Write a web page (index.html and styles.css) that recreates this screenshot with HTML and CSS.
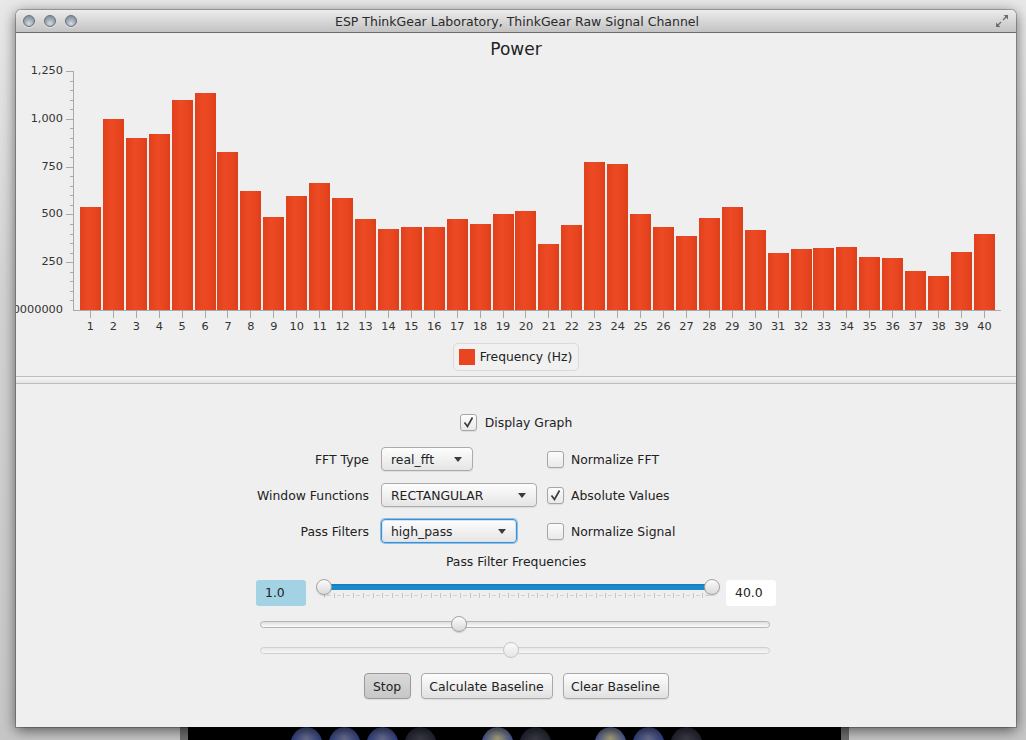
FILE: index.html
```html
<!DOCTYPE html>
<html>
<head>
<meta charset="utf-8">
<title>ESP ThinkGear Laboratory</title>
<link rel="stylesheet" href="styles.css">
</head>
<body>
<div class="backwin">
  <span class="ball blue"></span><span class="ball blue"></span><span class="ball blue"></span><span class="ball dark"></span>
  <span class="ball bright g1"></span><span class="ball dark"></span>
  <span class="ball bright g2"></span><span class="ball blue"></span><span class="ball dark"></span>
</div>
<div class="window">
  <div class="titlebar">
    <div class="lights"><span></span><span></span><span></span></div>
    <div class="title">ESP ThinkGear Laboratory, ThinkGear Raw Signal Channel</div>
    <svg class="resize" width="14" height="14" viewBox="0 0 14 14"><path d="M2.5 11.5L6 8M11.5 2.5L8 6" stroke="#6d6d6d" stroke-width="1.4" fill="none"/><path d="M1 13V8.6L5.4 13Z M13 1V5.4L8.6 1Z" fill="#6d6d6d"/></svg>
  </div>
  <div class="content">
    <section class="chart">
      <h1 class="chart-title">Power</h1>
      <div class="plot-row">
        <div class="y-labels">
          <span>1,250</span><span>1,000</span><span>750</span><span>500</span><span>250</span><span>0.00000000</span>
        </div>
        <svg class="y-ticks" width="11" height="247" viewBox="0 0 11 247">
          <path d="M10.5 7V247 M3 7.5H11 M7 17.5H11 M7 26.5H11 M7 36.5H11 M7 45.5H11 M3 55.5H11 M7 64.5H11 M7 74.5H11 M7 83.5H11 M7 93.5H11 M3 103.5H11 M7 112.5H11 M7 122.5H11 M7 131.5H11 M7 141.5H11 M3 150.5H11 M7 160.5H11 M7 170.5H11 M7 179.5H11 M7 189.5H11 M3 198.5H11 M7 208.5H11 M7 217.5H11 M7 227.5H11 M7 236.5H11" stroke="#a9a9a9" stroke-width="1" fill="none"/>
        </svg>
        <div class="plot">
          <div class="bars">
            <div class="slot"><div class="bar" style="height:103px"></div></div>
            <div class="slot"><div class="bar" style="height:191px"></div></div>
            <div class="slot"><div class="bar" style="height:172px"></div></div>
            <div class="slot"><div class="bar" style="height:176px"></div></div>
            <div class="slot"><div class="bar" style="height:210px"></div></div>
            <div class="slot"><div class="bar" style="height:217px"></div></div>
            <div class="slot"><div class="bar" style="height:158px"></div></div>
            <div class="slot"><div class="bar" style="height:119px"></div></div>
            <div class="slot"><div class="bar" style="height:93px"></div></div>
            <div class="slot"><div class="bar" style="height:114px"></div></div>
            <div class="slot"><div class="bar" style="height:127px"></div></div>
            <div class="slot"><div class="bar" style="height:112px"></div></div>
            <div class="slot"><div class="bar" style="height:91px"></div></div>
            <div class="slot"><div class="bar" style="height:81px"></div></div>
            <div class="slot"><div class="bar" style="height:83px"></div></div>
            <div class="slot"><div class="bar" style="height:83px"></div></div>
            <div class="slot"><div class="bar" style="height:91px"></div></div>
            <div class="slot"><div class="bar" style="height:86px"></div></div>
            <div class="slot"><div class="bar" style="height:96px"></div></div>
            <div class="slot"><div class="bar" style="height:99px"></div></div>
            <div class="slot"><div class="bar" style="height:66px"></div></div>
            <div class="slot"><div class="bar" style="height:85px"></div></div>
            <div class="slot"><div class="bar" style="height:148px"></div></div>
            <div class="slot"><div class="bar" style="height:146px"></div></div>
            <div class="slot"><div class="bar" style="height:96px"></div></div>
            <div class="slot"><div class="bar" style="height:83px"></div></div>
            <div class="slot"><div class="bar" style="height:74px"></div></div>
            <div class="slot"><div class="bar" style="height:92px"></div></div>
            <div class="slot"><div class="bar" style="height:103px"></div></div>
            <div class="slot"><div class="bar" style="height:80px"></div></div>
            <div class="slot"><div class="bar" style="height:57px"></div></div>
            <div class="slot"><div class="bar" style="height:61px"></div></div>
            <div class="slot"><div class="bar" style="height:62px"></div></div>
            <div class="slot"><div class="bar" style="height:63px"></div></div>
            <div class="slot"><div class="bar" style="height:53px"></div></div>
            <div class="slot"><div class="bar" style="height:52px"></div></div>
            <div class="slot"><div class="bar" style="height:39px"></div></div>
            <div class="slot"><div class="bar" style="height:34px"></div></div>
            <div class="slot"><div class="bar" style="height:58px"></div></div>
            <div class="slot"><div class="bar" style="height:76px"></div></div>
          </div>
        </div>
      </div>
      <div class="x-axis">
        <span>1</span><span>2</span><span>3</span><span>4</span><span>5</span><span>6</span><span>7</span><span>8</span><span>9</span><span>10</span>
        <span>11</span><span>12</span><span>13</span><span>14</span><span>15</span><span>16</span><span>17</span><span>18</span><span>19</span><span>20</span>
        <span>21</span><span>22</span><span>23</span><span>24</span><span>25</span><span>26</span><span>27</span><span>28</span><span>29</span><span>30</span>
        <span>31</span><span>32</span><span>33</span><span>34</span><span>35</span><span>36</span><span>37</span><span>38</span><span>39</span><span>40</span>
      </div>
      <div class="legend"><span class="swatch"></span>Frequency (Hz)</div>
    </section>
    <div class="divider"></div>
    <section class="controls">
      <label class="check main-check"><span class="box"><svg width="15" height="15" viewBox="0 0 15 15"><path d="M3.5 7.5L6.5 11.5L11.5 2.5" stroke="#3b3b3b" stroke-width="1.7" fill="none"/></svg></span>Display Graph</label>
      <div class="form-grid">
        <span class="form-label">FFT Type</span>
        <div class="combo-cell"><div class="combo w-fft"><span>real_fft</span><i class="arrow"></i></div></div>
        <label class="check"><span class="box"></span>Normalize FFT</label>

        <span class="form-label">Window Functions</span>
        <div class="combo-cell"><div class="combo w-win"><span>RECTANGULAR</span><i class="arrow"></i></div></div>
        <label class="check"><span class="box"><svg width="15" height="15" viewBox="0 0 15 15"><path d="M3.5 7.5L6.5 11.5L11.5 2.5" stroke="#3b3b3b" stroke-width="1.7" fill="none"/></svg></span>Absolute Values</label>

        <span class="form-label">Pass Filters</span>
        <div class="combo-cell"><div class="combo w-pass focused"><span>high_pass</span><i class="arrow"></i></div></div>
        <label class="check"><span class="box"></span>Normalize Signal</label>
      </div>
      <div class="freq-title">Pass Filter Frequencies</div>
      <div class="range-row">
        <div class="value-box low">1.0</div>
        <div class="range">
          <div class="range-fill"></div>
          <div class="range-ticks"></div>
          <span class="thumb" style="left:0px"></span>
          <span class="thumb" style="left:388px"></span>
        </div>
        <div class="value-box high">40.0</div>
      </div>
      <div class="slider"><div class="track"></div><span class="thumb" style="left:191px"></span></div>
      <div class="slider disabled"><div class="track"></div><span class="thumb" style="left:243px"></span></div>
      <div class="buttons">
        <button class="btn pressed w-stop">Stop</button>
        <button class="btn w-calc">Calculate Baseline</button>
        <button class="btn w-clear">Clear Baseline</button>
      </div>
    </section>
  </div>
</div>
</body>
</html>
```
FILE: styles.css
```css
* { box-sizing: border-box; }
html, body { margin: 0; }
body {
  width: 1026px;
  height: 740px;
  overflow: hidden;
  position: relative;
  padding: 10px 0 0 16px;
  background: linear-gradient(#e8e8e8, #d2d2d2 40%, #c6c6c6);
  font-family: "DejaVu Sans", "Liberation Sans", sans-serif;
  color: #2b2b2b;
}

/* background window peeking below */
.backwin {
  position: absolute;
  left: 180px;
  top: 700px;
  width: 669px;
  height: 60px;
  background: #000;
  border-left: 8px solid #6e6e6e;
  border-right: 8px solid #6e6e6e;
  display: flex;
  align-items: flex-start;
  gap: 5px;
  padding: 27px 0 0 102px;
}
.ball { width: 33px; height: 40px; border-radius: 50%; flex: none; }
.ball.blue { background: radial-gradient(circle at 50% 28%, #6a6f8e 0, #2b3a78 45%, #101636 80%); }
.ball.dark { background: radial-gradient(circle at 50% 28%, #3a3b44 0, #1b1d2a 50%, #07070b 85%); }
.ball.bright { background: radial-gradient(circle at 50% 28%, #a7a27a 0, #34448a 50%, #111838 85%); }
.ball.g1 { margin-left: 39px; }
.ball.g2 { margin-left: 37px; }

/* main window */
.window {
  position: relative;
  z-index: 1;
  width: 1000px;
  height: 717px;
  background: #efefef;
  border-radius: 5px 5px 0 0;
  box-shadow: 0 3px 14px rgba(0,0,0,.6), 0 0 0 1px rgba(0,0,0,.22);
  overflow: hidden;
  display: flex;
  flex-direction: column;
}
.titlebar {
  flex: none;
  height: 23px;
  display: grid;
  grid-template-columns: 1fr auto 1fr;
  align-items: center;
  padding: 0 5px 0 7px;
  background: linear-gradient(#ececec, #d9d9d9 45%, #c3c3c3);
  border-bottom: 1px solid #6c6c6c;
  border-radius: 5px 5px 0 0;
}
.lights { display: flex; gap: 9px; }
.lights span {
  width: 12px;
  height: 12px;
  border-radius: 50%;
  background: radial-gradient(circle at 50% 75%, #d5dce2 0, #a2adb8 45%, #78838f 100%);
  border: 1px solid #66707b;
  box-shadow: 0 1px 0 rgba(255,255,255,.5);
}
.title {
  font-size: 12.5px;
  color: #2a2a2a;
  white-space: nowrap;
}
.resize { justify-self: end; margin-right: 2px; }

.content { flex: 1; display: flex; flex-direction: column; }

/* chart */
.chart {
  height: 343px;
  display: flex;
  flex-direction: column;
  padding-top: 5px;
}
.chart-title {
  margin: 0 0 4px;
  font-size: 17px;
  line-height: 22px;
  font-weight: normal;
  text-align: center;
  color: #222;
}
.plot-row { display: flex; height: 247px; }
.y-labels {
  width: 47px;
  height: 253px;
  margin-bottom: -6px;
  display: flex;
  flex-direction: column;
  justify-content: space-between;
  font-size: 11.3px;
  line-height: 14px;
  color: #333;
}
.y-labels span {
  display: flex;
  justify-content: flex-end;
  overflow: hidden;
  white-space: nowrap;
}
.y-ticks { flex: none; display: block; }
.plot {
  width: 927px;
  height: 240px;
  margin-top: 7px;
  border-bottom: 1px solid #a9a9a9;
}
.bars {
  height: 100%;
  display: flex;
  align-items: flex-end;
  padding: 0 5px;
}
.slot { flex: 1; display: flex; justify-content: center; }
.bar {
  width: 21px;
  background: linear-gradient(90deg, #e0401c, #ec4a24 40%, #e9461f 70%, #dc3f1b);
}
.x-axis {
  display: flex;
  padding-left: 63px;
  width: 985px;
  padding-right: 5px;
  height: 22px;
}
.x-axis span {
  flex: 1;
  display: flex;
  flex-direction: column;
  align-items: center;
  font-size: 11.3px;
  line-height: 13px;
  color: #333;
}
.x-axis span::before {
  content: "";
  width: 1px;
  height: 7px;
  margin-bottom: 2px;
  background: #a9a9a9;
}
.legend {
  align-self: center;
  margin-top: 10px;
  height: 28px;
  display: flex;
  align-items: center;
  gap: 5px;
  padding: 0 6px 0 5px;
  border: 1px solid #dadada;
  border-radius: 5px;
  background: #f1f1f1;
  font-size: 12.3px;
  color: #222;
}
.swatch { width: 16px; height: 16px; background: #ea4521; }

.divider {
  height: 8px;
  flex: none;
  border-top: 1px solid #bcbcbc;
  border-bottom: 1px solid #bcbcbc;
  background: linear-gradient(#f6f6f6, #e4e4e4);
}

/* controls */
.controls {
  flex: 1;
  display: flex;
  flex-direction: column;
  padding-top: 30px;
  font-size: 12.4px;
  color: #222;
}
.check {
  display: flex;
  align-items: center;
  gap: 7px;
  height: 17px;
  line-height: 17px;
  white-space: nowrap;
}
.main-check { align-self: center; gap: 8px; }
.box {
  width: 17px;
  height: 17px;
  flex: none;
  border: 1px solid #a6a6a6;
  border-radius: 3px;
  background: linear-gradient(#fcfcfc, #e9e9e9);
  box-shadow: 0 1px 1px rgba(0,0,0,.08);
  display: flex;
  align-items: center;
  justify-content: center;
}
.form-grid {
  margin-top: 16px;
  display: grid;
  grid-template-columns: 365px 166px 1fr;
  grid-auto-rows: 24px;
  row-gap: 12px;
  align-items: center;
}
.form-label { text-align: right; padding-right: 12px; white-space: nowrap; }
.combo-cell { display: flex; }
.combo {
  height: 24px;
  display: flex;
  align-items: center;
  justify-content: space-between;
  padding: 0 10px 0 9px;
  border: 1px solid #ababab;
  border-radius: 4px;
  background: linear-gradient(#fdfdfd, #e5e5e5);
  box-shadow: 0 1px 1px rgba(0,0,0,.08);
}
.w-fft { width: 92px; }
.w-win { width: 156px; }
.w-pass { width: 136px; }
.combo.focused {
  border-color: #3f8fd0;
  box-shadow: 0 0 0 1px #8cbde6, inset 0 0 0 1px #cfe4f5;
}
.arrow {
  width: 0;
  height: 0;
  border-left: 4px solid transparent;
  border-right: 4px solid transparent;
  border-top: 5px solid #3c3c3c;
}
.freq-title {
  margin-top: 11px;
  line-height: 16px;
  text-align: center;
}
.range-row {
  margin-top: 10px;
  display: flex;
  justify-content: center;
  align-items: flex-start;
  height: 26px;
}
.value-box {
  width: 50px;
  height: 26px;
  line-height: 26px;
  padding-left: 9px;
  border-radius: 3px;
}
.value-box.low { background: #a3d2e4; }
.value-box.high { background: #fff; margin-left: 6px; }
.range {
  position: relative;
  width: 404px;
  height: 26px;
  margin-left: 10px;
}
.range-fill {
  margin: 4px 8px 0;
  height: 6px;
  background: linear-gradient(#1479bb, #1c8ccd 40%, #1b88c9);
}
.range-ticks {
  margin: 3px 8px 0;
  height: 5px;
  background:
    repeating-linear-gradient(90deg, #c4c4c4 0 1px, transparent 1px 9.7px) 0 0 / 100% 5px no-repeat,
    repeating-linear-gradient(90deg, transparent 0 3px, #d2d2d2 3px 7px, transparent 7px 9.7px) 0 2px / 100% 1px no-repeat;
}
.thumb {
  position: absolute;
  top: -1px;
  width: 16px;
  height: 16px;
  border-radius: 50%;
  border: 1px solid #a3a3a3;
  background: linear-gradient(#fbfbfb, #dadada);
  box-shadow: 0 1px 1px rgba(0,0,0,.15);
}
.slider {
  position: relative;
  margin: 10px 0 0 244px;
  width: 510px;
  height: 16px;
  display: flex;
  align-items: center;
}
.track {
  width: 100%;
  height: 7px;
  border-radius: 4px;
  border: 1px solid #b5b5b5;
  background: linear-gradient(#dedede, #fbfbfb);
}
.slider .thumb { top: 0; }
.slider.disabled .track { border-color: #cfcfcf; background: linear-gradient(#e7e7e7, #f7f7f7); }
.slider.disabled .thumb { border-color: #c6c6c6; background: linear-gradient(#f9f9f9, #e6e6e6); box-shadow: none; }
.buttons {
  margin-top: 15px;
  display: flex;
  justify-content: center;
  gap: 10px;
}
.btn {
  height: 26px;
  padding: 0;
  font: 12.4px "DejaVu Sans", "Liberation Sans", sans-serif;
  color: #222;
  border: 1px solid #a9a9a9;
  border-radius: 4px;
  background: linear-gradient(#fdfdfd, #e1e1e1);
  box-shadow: 0 1px 1px rgba(0,0,0,.08);
}
.w-stop { width: 47px; }
.w-calc { width: 132px; }
.w-clear { width: 106px; }
.btn.pressed {
  border-color: #9a9a9a;
  background: linear-gradient(#d9d9d9, #c7c7c7);
}
```
